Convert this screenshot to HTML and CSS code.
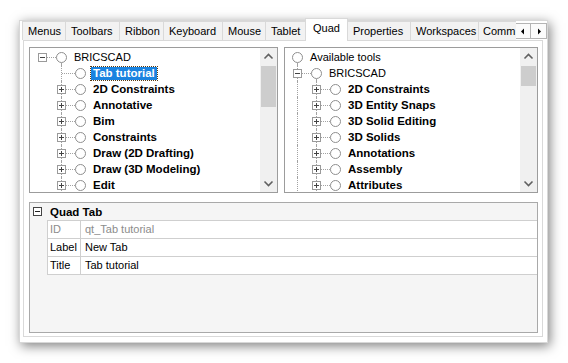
FILE: index.html
```html
<!DOCTYPE html>
<html>
<head>
<meta charset="utf-8">
<link rel="stylesheet" href="styles.css">
</head>
<body>
<div class="stage">
  <div class="win">
    <div class="tabbar">
      <div class="tabs">
        <div class="tab w-menus">Menus</div>
        <div class="tab w-toolbars">Toolbars</div>
        <div class="tab w-ribbon">Ribbon</div>
        <div class="tab w-keyboard">Keyboard</div>
        <div class="tab w-mouse">Mouse</div>
        <div class="tab w-tablet">Tablet</div>
        <div class="tab active w-quad">Quad</div>
        <div class="tab w-props">Properties</div>
        <div class="tab w-ws">Workspaces</div>
        <div class="tab w-comm">Comm</div>
      </div>
      <div class="spin">
        <div class="sbtn"><svg width="14" height="13" viewBox="0 0 14 13"><path d="M8 3.5v6L5 6.5z" fill="#000"/></svg></div>
        <div class="sbtn"><svg width="14" height="13" viewBox="0 0 14 13"><path d="M6 3.5v6L9 6.5z" fill="#000"/></svg></div>
      </div>
    </div>

    <div class="panel">
      <div class="trees">
        <div class="tree tree-left">
          <div class="rows">
            <div class="row">
              <span class="c h"><svg class="ex" width="9" height="9"><rect x=".5" y=".5" width="8" height="8" fill="#fff" stroke="#9a9a9a"/><path d="M2 4.5h5" stroke="#444"/></svg></span>
              <span class="c o down"><svg class="rad" width="11" height="11"><circle cx="5.5" cy="5.5" r="5" fill="#fff" stroke="#8e8e8e"/></svg></span>
              <span class="lbl">BRICSCAD</span>
            </div>
            <div class="row">
              <span class="c"></span>
              <span class="c v h"></span>
              <span class="c o"><svg class="rad" width="11" height="11"><circle cx="5.5" cy="5.5" r="5" fill="#fff" stroke="#8e8e8e"/></svg></span>
              <span class="lbl b sel">Tab tutorial</span>
            </div>
            <div class="row">
              <span class="c"></span>
              <span class="c v h"><svg class="ex" width="9" height="9"><rect x=".5" y=".5" width="8" height="8" fill="#fff" stroke="#9a9a9a"/><path d="M2 4.5h5M4.5 2v5" stroke="#444"/></svg></span>
              <span class="c o"><svg class="rad" width="11" height="11"><circle cx="5.5" cy="5.5" r="5" fill="#fff" stroke="#8e8e8e"/></svg></span>
              <span class="lbl b">2D Constraints</span>
            </div>
            <div class="row">
              <span class="c"></span>
              <span class="c v h"><svg class="ex" width="9" height="9"><rect x=".5" y=".5" width="8" height="8" fill="#fff" stroke="#9a9a9a"/><path d="M2 4.5h5M4.5 2v5" stroke="#444"/></svg></span>
              <span class="c o"><svg class="rad" width="11" height="11"><circle cx="5.5" cy="5.5" r="5" fill="#fff" stroke="#8e8e8e"/></svg></span>
              <span class="lbl b">Annotative</span>
            </div>
            <div class="row">
              <span class="c"></span>
              <span class="c v h"><svg class="ex" width="9" height="9"><rect x=".5" y=".5" width="8" height="8" fill="#fff" stroke="#9a9a9a"/><path d="M2 4.5h5M4.5 2v5" stroke="#444"/></svg></span>
              <span class="c o"><svg class="rad" width="11" height="11"><circle cx="5.5" cy="5.5" r="5" fill="#fff" stroke="#8e8e8e"/></svg></span>
              <span class="lbl b">Bim</span>
            </div>
            <div class="row">
              <span class="c"></span>
              <span class="c v h"><svg class="ex" width="9" height="9"><rect x=".5" y=".5" width="8" height="8" fill="#fff" stroke="#9a9a9a"/><path d="M2 4.5h5M4.5 2v5" stroke="#444"/></svg></span>
              <span class="c o"><svg class="rad" width="11" height="11"><circle cx="5.5" cy="5.5" r="5" fill="#fff" stroke="#8e8e8e"/></svg></span>
              <span class="lbl b">Constraints</span>
            </div>
            <div class="row">
              <span class="c"></span>
              <span class="c v h"><svg class="ex" width="9" height="9"><rect x=".5" y=".5" width="8" height="8" fill="#fff" stroke="#9a9a9a"/><path d="M2 4.5h5M4.5 2v5" stroke="#444"/></svg></span>
              <span class="c o"><svg class="rad" width="11" height="11"><circle cx="5.5" cy="5.5" r="5" fill="#fff" stroke="#8e8e8e"/></svg></span>
              <span class="lbl b">Draw (2D Drafting)</span>
            </div>
            <div class="row">
              <span class="c"></span>
              <span class="c v h"><svg class="ex" width="9" height="9"><rect x=".5" y=".5" width="8" height="8" fill="#fff" stroke="#9a9a9a"/><path d="M2 4.5h5M4.5 2v5" stroke="#444"/></svg></span>
              <span class="c o"><svg class="rad" width="11" height="11"><circle cx="5.5" cy="5.5" r="5" fill="#fff" stroke="#8e8e8e"/></svg></span>
              <span class="lbl b">Draw (3D Modeling)</span>
            </div>
            <div class="row">
              <span class="c"></span>
              <span class="c v h"><svg class="ex" width="9" height="9"><rect x=".5" y=".5" width="8" height="8" fill="#fff" stroke="#9a9a9a"/><path d="M2 4.5h5M4.5 2v5" stroke="#444"/></svg></span>
              <span class="c o"><svg class="rad" width="11" height="11"><circle cx="5.5" cy="5.5" r="5" fill="#fff" stroke="#8e8e8e"/></svg></span>
              <span class="lbl b">Edit</span>
            </div>
          </div>
          <div class="vscroll">
            <div class="arr"><svg width="17" height="17"><path d="M4.5 10.5l4-4 4 4" stroke="#606060" stroke-width="1.6" fill="none"/></svg></div>
            <div class="track"><div class="thumb th-left"></div></div>
            <div class="arr"><svg width="17" height="17"><path d="M4.5 6.5l4 4 4-4" stroke="#606060" stroke-width="1.6" fill="none"/></svg></div>
          </div>
        </div>

        <div class="tree tree-right">
          <div class="rows">
            <div class="row">
              <span class="c o down"><svg class="rad" width="11" height="11"><circle cx="5.5" cy="5.5" r="5" fill="#fff" stroke="#8e8e8e"/></svg></span>
              <span class="lbl">Available tools</span>
            </div>
            <div class="row">
              <span class="c v h"><svg class="ex" width="9" height="9"><rect x=".5" y=".5" width="8" height="8" fill="#fff" stroke="#9a9a9a"/><path d="M2 4.5h5" stroke="#444"/></svg></span>
              <span class="c o down"><svg class="rad" width="11" height="11"><circle cx="5.5" cy="5.5" r="5" fill="#fff" stroke="#8e8e8e"/></svg></span>
              <span class="lbl">BRICSCAD</span>
            </div>
            <div class="row">
              <span class="c v"></span>
              <span class="c v h"><svg class="ex" width="9" height="9"><rect x=".5" y=".5" width="8" height="8" fill="#fff" stroke="#9a9a9a"/><path d="M2 4.5h5M4.5 2v5" stroke="#444"/></svg></span>
              <span class="c o"><svg class="rad" width="11" height="11"><circle cx="5.5" cy="5.5" r="5" fill="#fff" stroke="#8e8e8e"/></svg></span>
              <span class="lbl b">2D Constraints</span>
            </div>
            <div class="row">
              <span class="c v"></span>
              <span class="c v h"><svg class="ex" width="9" height="9"><rect x=".5" y=".5" width="8" height="8" fill="#fff" stroke="#9a9a9a"/><path d="M2 4.5h5M4.5 2v5" stroke="#444"/></svg></span>
              <span class="c o"><svg class="rad" width="11" height="11"><circle cx="5.5" cy="5.5" r="5" fill="#fff" stroke="#8e8e8e"/></svg></span>
              <span class="lbl b">3D Entity Snaps</span>
            </div>
            <div class="row">
              <span class="c v"></span>
              <span class="c v h"><svg class="ex" width="9" height="9"><rect x=".5" y=".5" width="8" height="8" fill="#fff" stroke="#9a9a9a"/><path d="M2 4.5h5M4.5 2v5" stroke="#444"/></svg></span>
              <span class="c o"><svg class="rad" width="11" height="11"><circle cx="5.5" cy="5.5" r="5" fill="#fff" stroke="#8e8e8e"/></svg></span>
              <span class="lbl b">3D Solid Editing</span>
            </div>
            <div class="row">
              <span class="c v"></span>
              <span class="c v h"><svg class="ex" width="9" height="9"><rect x=".5" y=".5" width="8" height="8" fill="#fff" stroke="#9a9a9a"/><path d="M2 4.5h5M4.5 2v5" stroke="#444"/></svg></span>
              <span class="c o"><svg class="rad" width="11" height="11"><circle cx="5.5" cy="5.5" r="5" fill="#fff" stroke="#8e8e8e"/></svg></span>
              <span class="lbl b">3D Solids</span>
            </div>
            <div class="row">
              <span class="c v"></span>
              <span class="c v h"><svg class="ex" width="9" height="9"><rect x=".5" y=".5" width="8" height="8" fill="#fff" stroke="#9a9a9a"/><path d="M2 4.5h5M4.5 2v5" stroke="#444"/></svg></span>
              <span class="c o"><svg class="rad" width="11" height="11"><circle cx="5.5" cy="5.5" r="5" fill="#fff" stroke="#8e8e8e"/></svg></span>
              <span class="lbl b">Annotations</span>
            </div>
            <div class="row">
              <span class="c v"></span>
              <span class="c v h"><svg class="ex" width="9" height="9"><rect x=".5" y=".5" width="8" height="8" fill="#fff" stroke="#9a9a9a"/><path d="M2 4.5h5M4.5 2v5" stroke="#444"/></svg></span>
              <span class="c o"><svg class="rad" width="11" height="11"><circle cx="5.5" cy="5.5" r="5" fill="#fff" stroke="#8e8e8e"/></svg></span>
              <span class="lbl b">Assembly</span>
            </div>
            <div class="row">
              <span class="c v"></span>
              <span class="c v h"><svg class="ex" width="9" height="9"><rect x=".5" y=".5" width="8" height="8" fill="#fff" stroke="#9a9a9a"/><path d="M2 4.5h5M4.5 2v5" stroke="#444"/></svg></span>
              <span class="c o"><svg class="rad" width="11" height="11"><circle cx="5.5" cy="5.5" r="5" fill="#fff" stroke="#8e8e8e"/></svg></span>
              <span class="lbl b">Attributes</span>
            </div>
          </div>
          <div class="vscroll">
            <div class="arr"><svg width="17" height="17"><path d="M4.5 10.5l4-4 4 4" stroke="#606060" stroke-width="1.6" fill="none"/></svg></div>
            <div class="track"><div class="thumb th-right"></div></div>
            <div class="arr"><svg width="17" height="17"><path d="M4.5 6.5l4 4 4-4" stroke="#606060" stroke-width="1.6" fill="none"/></svg></div>
          </div>
        </div>
      </div>

      <div class="grid">
        <div class="cat">
          <span class="gut"><svg width="9" height="9"><rect x=".5" y=".5" width="8" height="8" fill="#fff" stroke="#444"/><path d="M2 4.5h5" stroke="#222"/></svg></span>
          <span class="catname">Quad Tab</span>
        </div>
        <div class="prow dim">
          <span class="gut"></span>
          <span class="k">ID</span>
          <span class="val">qt_Tab tutorial</span>
        </div>
        <div class="prow">
          <span class="gut"></span>
          <span class="k">Label</span>
          <span class="val">New Tab</span>
        </div>
        <div class="prow last">
          <span class="gut"></span>
          <span class="k">Title</span>
          <span class="val">Tab tutorial</span>
        </div>
      </div>
    </div>
  </div>
</div>
</body>
</html>
```

FILE: styles.css
```css
* { box-sizing: border-box; }
html, body { margin: 0; padding: 0; background: #fff; }
body {
  width: 568px;
  height: 363px;
  overflow: hidden;
  font-family: "Liberation Sans", Arial, sans-serif;
  font-size: 11px;
  color: #000;
}
.stage { padding: 20px 0 0 19px; }

.win {
  width: 529px;
  height: 323px;
  background: #fff;
  border: 1px solid #d8d8d8;
  box-shadow: 2px 3px 11px rgba(0, 0, 0, 0.5);
  display: flex;
  flex-direction: column;
}

/* tab strip */
.tabbar {
  display: flex;
  height: 19px;
  flex: none;
}
.tabs {
  flex: 1;
  display: flex;
  padding-left: 1px;
  min-width: 0;
  position: relative;
}
.tab {
  flex: none;
  height: 19px;
  margin-left: -1px;
  padding-left: 5px;
  border: 1px solid #d9d9d9;
  border-bottom: none;
  background: #f2f2f2;
  line-height: 18px;
  white-space: nowrap;
}
.tab:first-child { margin-left: 1px; }
.tab.active {
  background: #fff;
  height: 23px;
  margin-top: -3px;
  padding-left: 7px;
  line-height: 19px;
  position: relative;
  z-index: 2;
}
.w-menus { width: 44px; }
.w-toolbars { width: 55px; }
.w-ribbon { width: 45px; }
.w-keyboard { width: 60px; }
.w-mouse { width: 44px; }
.w-tablet { width: 41px; }
.w-quad { width: 43px; }
.w-props { width: 64px; }
.w-ws { width: 69px; }
.w-comm { width: 38px; padding-left: 4px; border-right: none; }

.spin {
  flex: none;
  display: flex;
  padding-top: 2px;
}
.sbtn {
  width: 16px;
  height: 16px;
  border: 1px solid #b4b4b4;
  background: #fbfbfb;
  display: flex;
  align-items: center;
  justify-content: center;
}
.sbtn + .sbtn { margin-left: -1px; width: 17px; }

/* main panel */
.panel {
  flex: 1;
  margin: 0 4px 5px 3px;
  border: 1px solid #d9d9d9;
  background: #fff;
  padding: 6px 4px 3px 5px;
  display: flex;
  flex-direction: column;
  gap: 9px;
}
.trees {
  display: flex;
  gap: 6px;
  height: 146px;
  flex: none;
}
.tree {
  border: 1px solid #9c9c9c;
  background: #fff;
  display: flex;
  overflow: hidden;
}
.tree-left { width: 249px; }
.tree-right { flex: 1; }
.rows {
  flex: 1;
  padding: 1px 0 0 3px;
  overflow: hidden;
}
.row {
  display: flex;
  align-items: center;
  height: 16px;
  white-space: nowrap;
}
.c {
  width: 19px;
  height: 16px;
  flex: none;
  position: relative;
}
.c.v::before {
  content: "";
  position: absolute;
  left: 9px;
  top: 0;
  height: 16px;
  border-left: 1px dotted #a2a2a2;
}
.c.h::after {
  content: "";
  position: absolute;
  left: 14px;
  right: -4px;
  top: 8px;
  border-top: 1px dotted #a2a2a2;
}
.c.v.h:not(:has(svg))::after { left: 10px; }
.c .ex {
  position: absolute;
  left: 5px;
  top: 4px;
}
.c .rad {
  position: absolute;
  left: 4px;
  top: 3px;
}
.c.o.down::after {
  content: "";
  position: absolute;
  left: 9px;
  top: 14px;
  bottom: 0;
  border-left: 1px dotted #a2a2a2;
}
.lbl {
  margin-left: 1px;
  padding: 0 2px;
  line-height: 13px;
}
.lbl.b {
  font-weight: bold;
  font-size: 11.5px;
}
.lbl.sel {
  background: #1a83e0;
  color: #fff;
  outline: 1px dotted #5a3a10;
}

.vscroll {
  width: 17px;
  flex: none;
  background: #f0f0f0;
  display: flex;
  flex-direction: column;
}
.arr { height: 17px; flex: none; }
.arr svg { display: block; }
.track { flex: 1; padding-top: 1px; }
.thumb { background: #cdcdcd; margin: 0 1px; }
.th-left { height: 41px; }
.th-right { height: 20px; }

/* property grid */
.grid {
  flex: 1;
  border: 1px solid #a9a9a9;
  background: #f5f5f5;
}
.cat {
  display: flex;
  align-items: center;
  height: 17px;
}
.gut {
  width: 17px;
  flex: none;
  display: flex;
  align-items: center;
  padding-left: 3px;
}
.gut svg { display: block; }
.catname {
  font-weight: bold;
  font-size: 11.5px;
  padding-left: 3px;
}
.prow {
  display: flex;
  height: 18px;
}
.prow .k, .prow .val {
  background: #fff;
  border-top: 1px solid #cfcfcf;
  border-left: 1px solid #cfcfcf;
  line-height: 17px;
  white-space: nowrap;
}
.prow.last { height: 19px; }
.prow.last .k, .prow.last .val { border-bottom: 1px solid #cfcfcf; }
.prow .k { width: 33px; padding-left: 2px; }
.prow .val { flex: 1; padding-left: 4px; }
.prow.dim { color: #8c8c8c; }
```
